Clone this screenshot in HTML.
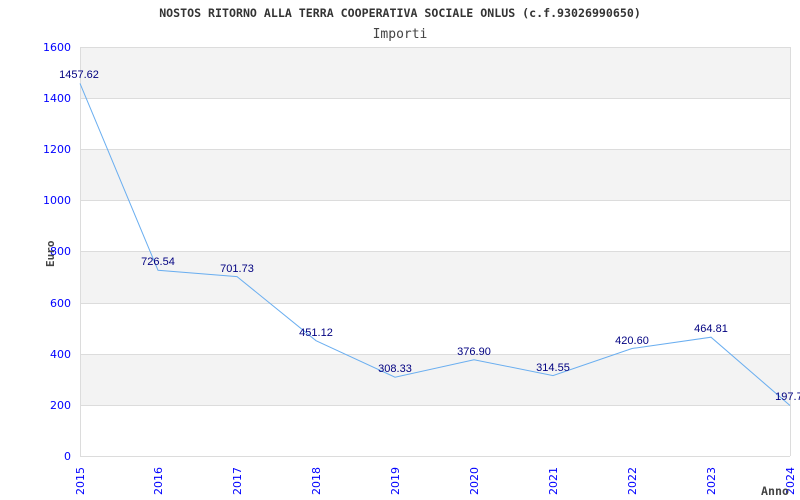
<!DOCTYPE html>
<html><head><style>body{margin:0;background:#fff}svg{display:block}</style></head><body>
<svg width="800" height="500" xmlns="http://www.w3.org/2000/svg">
<rect x="0" y="0" width="800" height="500" fill="#fff"/>
<g fill="#f3f3f3">
<rect x="80" y="47" width="710" height="51"/>
<rect x="80" y="149" width="710" height="51"/>
<rect x="80" y="251" width="710" height="52"/>
<rect x="80" y="354" width="710" height="51"/>
</g>
<g stroke="#dcdcdc" stroke-width="1">
<line x1="80" y1="47.5" x2="790" y2="47.5"/>
<line x1="80" y1="98.5" x2="790" y2="98.5"/>
<line x1="80" y1="149.5" x2="790" y2="149.5"/>
<line x1="80" y1="200.5" x2="790" y2="200.5"/>
<line x1="80" y1="251.5" x2="790" y2="251.5"/>
<line x1="80" y1="303.5" x2="790" y2="303.5"/>
<line x1="80" y1="354.5" x2="790" y2="354.5"/>
<line x1="80" y1="405.5" x2="790" y2="405.5"/>
<line x1="80" y1="456.5" x2="790" y2="456.5"/>
<line x1="80.5" y1="47" x2="80.5" y2="456"/>
<line x1="790.5" y1="47" x2="790.5" y2="456"/>
</g>
<polyline fill="none" stroke="#6aaef0" stroke-width="1" points="80,83.4 158,270.3 237,276.6 316,340.7 395,377.2 474,359.7 553,375.6 632,348.5 711,337.2 790,405.5"/>
<g font-family="Liberation Sans, sans-serif" font-size="11" fill="#000080" text-anchor="middle">
<text x="79" y="78">1457.62</text>
<text x="158" y="265">726.54</text>
<text x="237" y="272">701.73</text>
<text x="316" y="336">451.12</text>
<text x="395" y="372">308.33</text>
<text x="474" y="355">376.90</text>
<text x="553" y="371">314.55</text>
<text x="632" y="344">420.60</text>
<text x="711" y="332">464.81</text>
<text x="792" y="400">197.70</text>
</g>
<g font-family="DejaVu Sans, sans-serif" font-size="11" fill="#0000ff" text-anchor="end">
<text x="71" y="51">1600</text>
<text x="71" y="102">1400</text>
<text x="71" y="153">1200</text>
<text x="71" y="204">1000</text>
<text x="71" y="255">800</text>
<text x="71" y="307">600</text>
<text x="71" y="358">400</text>
<text x="71" y="409">200</text>
<text x="71" y="460">0</text>
</g>
<g font-family="DejaVu Sans, sans-serif" font-size="11" fill="#0000ff">
<text transform="translate(84,495) rotate(-90)">2015</text>
<text transform="translate(162,495) rotate(-90)">2016</text>
<text transform="translate(241,495) rotate(-90)">2017</text>
<text transform="translate(320,495) rotate(-90)">2018</text>
<text transform="translate(399,495) rotate(-90)">2019</text>
<text transform="translate(478,495) rotate(-90)">2020</text>
<text transform="translate(557,495) rotate(-90)">2021</text>
<text transform="translate(636,495) rotate(-90)">2022</text>
<text transform="translate(715,495) rotate(-90)">2023</text>
<text transform="translate(794,495) rotate(-90)">2024</text>
</g>
<text x="400" y="17" text-anchor="middle" font-family="DejaVu Sans Mono, monospace" font-weight="bold" font-size="11.6" fill="#333">NOSTOS RITORNO ALLA TERRA COOPERATIVA SOCIALE ONLUS (c.f.93026990650)</text>
<text x="400" y="38" text-anchor="middle" font-family="DejaVu Sans Mono, monospace" font-size="13" fill="#444">Importi</text>
<text x="761" y="495" font-family="DejaVu Sans Mono, monospace" font-weight="bold" font-size="11.6" fill="#444">Anno</text>
<text transform="translate(54,267) rotate(-90)" font-family="DejaVu Sans Mono, monospace" font-weight="bold" font-size="11" fill="#444">Euro</text>
</svg>
</body></html>
